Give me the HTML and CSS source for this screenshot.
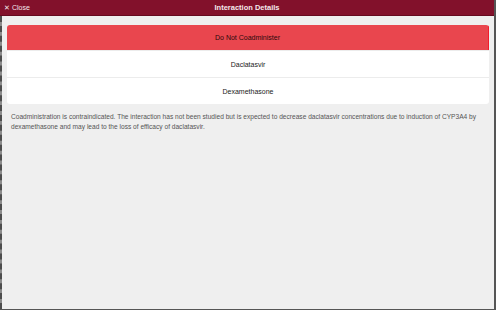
FILE: index.html
```html
<!DOCTYPE html>
<html lang="en">
<head>
  <meta charset="UTF-8" />
  <title>Interaction Details</title>
  <link rel="stylesheet" href="styles.css">
</head>
<body>
  <div class="app">
    <header class="topbar">
      <span class="close">&#10005; Close</span>
      <span class="title">Interaction Details</span>
    </header>

    <main class="content">
      <div class="card">
        <div class="row severity">Do Not Coadminister</div>
        <div class="row">Daclatasvir</div>
        <div class="row">Dexamethasone</div>
      </div>

      <p class="summary">Coadministration is contraindicated. The interaction has not been studied but is expected to decrease daclatasvir concentrations due to induction of CYP3A4 by dexamethasone and may lead to the loss of efficacy of daclatasvir.</p>
    </main>
  </div>
</body>
</html>
```

FILE: styles.css
```css
html, body {
  margin: 0;
  padding: 0;
  height: 100%;
}
body {
  font-family: "Liberation Sans", Arial, sans-serif;
  background: #efefef;
}
.app {
  display: flex;
  flex-direction: column;
  height: 100vh;
  box-sizing: border-box;
  border-right: 2px solid #555;
  border-bottom: 1px solid #555;
}
.topbar {
  position: relative;
  display: flex;
  align-items: center;
  justify-content: center;
  height: 15px;
  background: #82112b;
  border-bottom: 1px solid #660a1f;
  color: #f4e8eb;
  font-size: 7px;
}
.close {
  position: absolute;
  left: 4px;
  top: 3px;
  line-height: 9px;
}
.title {
  font-weight: bold;
  font-size: 7.5px;
}
.content {
  flex: 1;
  border-left: 2px dashed #4d4d4d;
  background: linear-gradient(#8c8c8c, #8c8c8c) left top / 2px 100% no-repeat border-box, #efefef;
  padding: 9px 5px 0 5px;
}
.card {
  background: #fff;
  border-radius: 3px;
  overflow: hidden;
}
.row {
  box-sizing: border-box;
  height: 27px;
  display: flex;
  align-items: center;
  justify-content: center;
  font-size: 7px;
  color: #222;
}
.row + .row {
  border-top: 1px solid #ececec;
}
.row.severity {
  height: 25px;
  background: #e9464e;
  border-right: 1px solid #f21c2c;
  color: #2a0a0c;
}
.summary {
  margin: 8px 4px 0 4px;
  font-size: 6.6px;
  line-height: 9.5px;
  color: #555;
}
```
